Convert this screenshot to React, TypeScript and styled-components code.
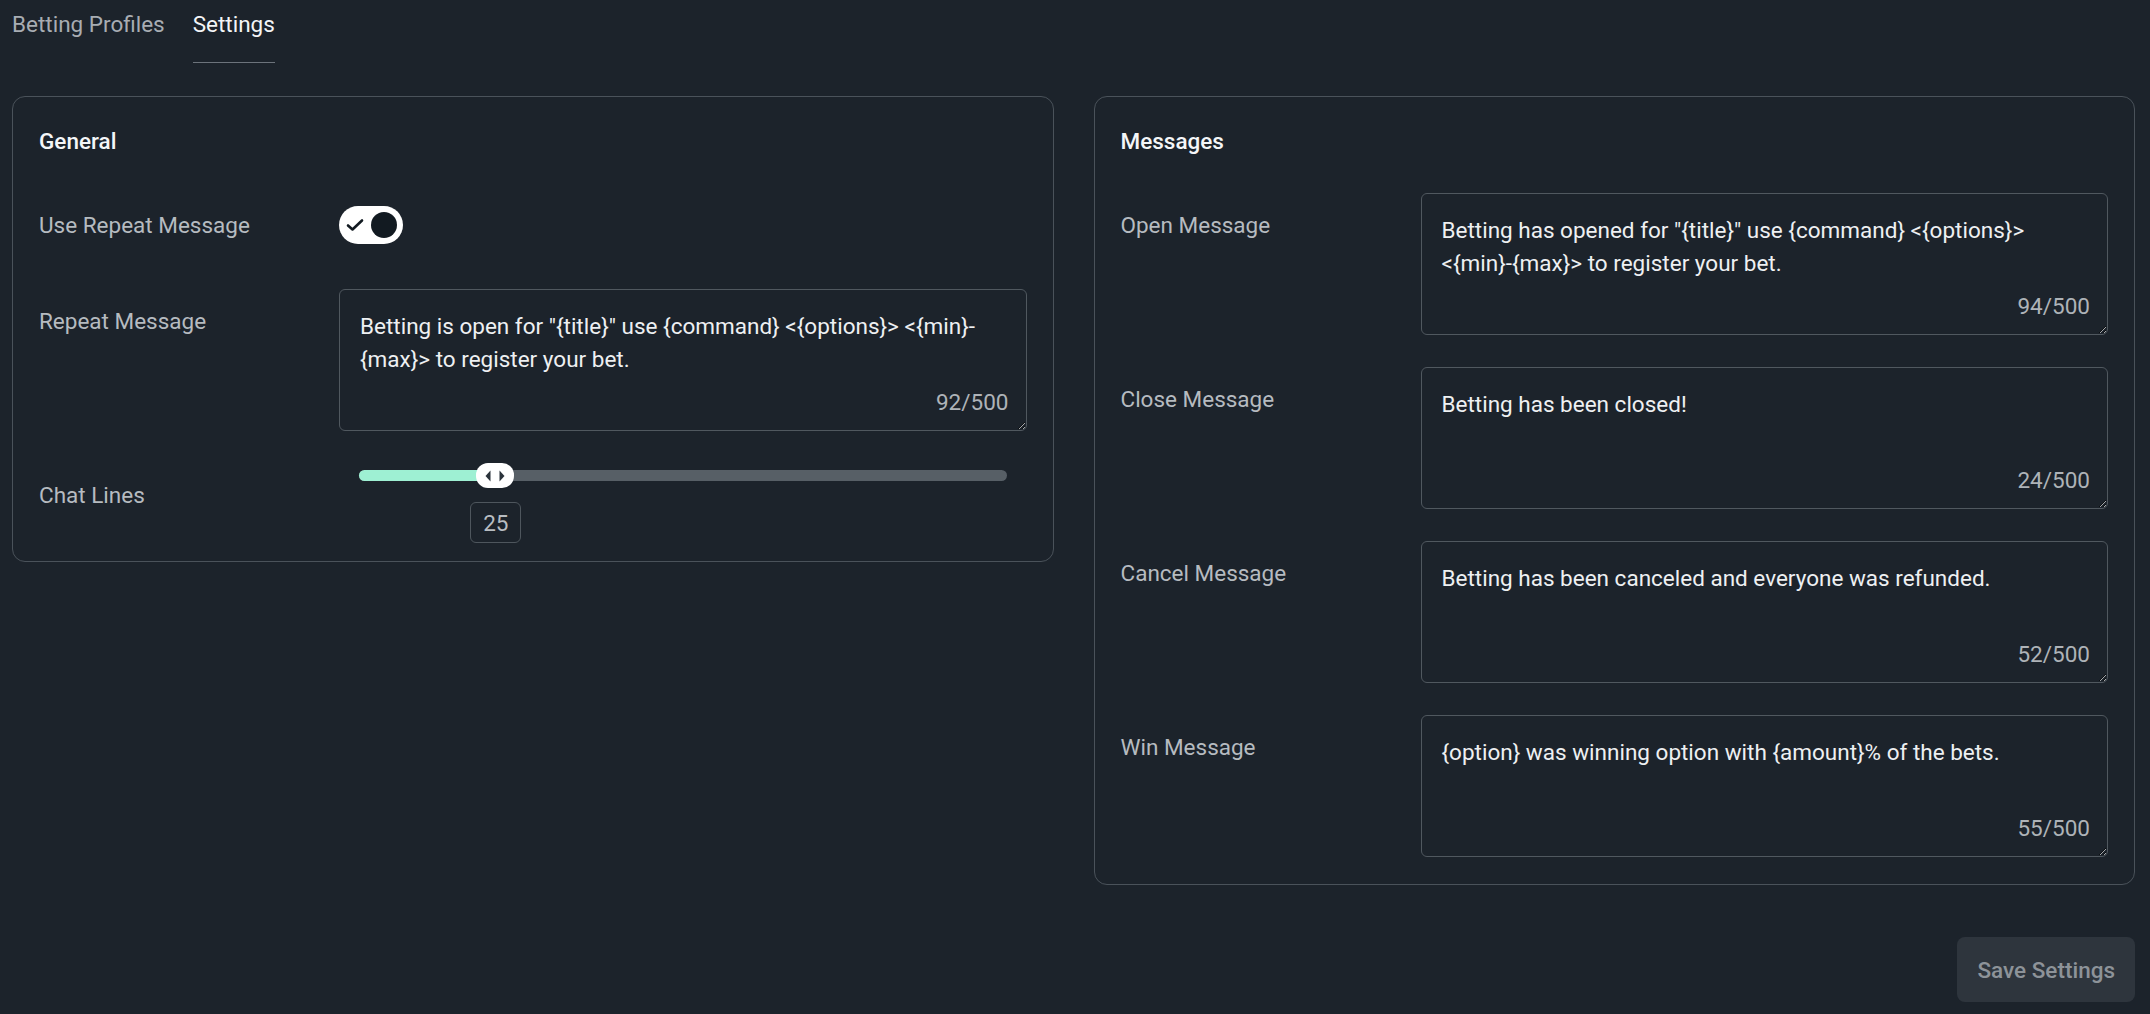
import styled, { createGlobalStyle } from "styled-components";

const GlobalStyle = createGlobalStyle`
  html, body {
    margin: 0;
    padding: 0;
    background: #1c232b;
  }

  body {
    font-family: Roboto, "Liberation Sans", sans-serif;
    font-size: 22.5px;
    color: #eef0f2;
  }

  * {
    box-sizing: border-box;
  }
`;

const Page = styled.div`
  min-height: 1014px;
  padding: 0 15px 24px 12px;
  background: #1c232b;
`;

const TabBar = styled.nav`
  display: flex;
  gap: 28px;
  padding-top: 8px;
`;

const Tab = styled.div<{ $active?: boolean }>`
  padding-bottom: 21px;
  font-size: 22.5px;
  line-height: 33px;
  color: ${(p) => (p.$active ? "#f3f5f7" : "#a8adb3")};
  border-bottom: 1px solid ${(p) => (p.$active ? "#6c737b" : "transparent")};
`;

const Columns = styled.div`
  display: grid;
  grid-template-columns: 1fr 1fr;
  gap: 40px;
  align-items: start;
  margin-top: 33px;
`;

const Card = styled.section<{ $bottom?: number }>`
  border: 1px solid #4a525a;
  border-radius: 13px;
  padding: 28px 26px ${(p) => p.$bottom ?? 27}px;
`;

const CardTitle = styled.h2`
  margin: 0 0 35px;
  font-size: 22.5px;
  line-height: 33px;
  font-weight: 500;
  color: #f4f6f8;
`;

const Rows = styled.div`
  display: flex;
  flex-direction: column;
  gap: 32px;
`;

const Field = styled.div`
  display: grid;
  grid-template-columns: 300px 1fr;
  align-items: start;
`;

const Label = styled.label`
  padding-top: 16px;
  font-size: 22.5px;
  line-height: 33px;
  color: #b6bbc0;
`;

const ToggleHolder = styled.div`
  display: flex;
  align-items: center;
  height: 64px;
`;

const Toggle = styled.div`
  display: flex;
  align-items: center;
  justify-content: space-between;
  width: 64px;
  height: 38px;
  padding: 0 6px 0 7px;
  border-radius: 19px;
  background: #ffffff;
`;

const Knob = styled.span`
  width: 26px;
  height: 26px;
  border-radius: 50%;
  background: #121a21;
`;

const AreaWrap = styled.div`
  position: relative;
`;

const TextArea = styled.textarea`
  display: block;
  width: 100%;
  height: 142px;
  padding: 20px 20px;
  border: 1px solid #50585f;
  border-radius: 6px;
  background: #1c232b;
  color: #eef0f2;
  font-family: Roboto, "Liberation Sans", sans-serif;
  font-size: 22.5px;
  line-height: 33px;
  resize: vertical;
  outline: none;
`;

const Counter = styled.span`
  position: absolute;
  right: 18px;
  bottom: 12px;
  font-size: 22.5px;
  line-height: 33px;
  color: #aeb3b8;
`;

const SliderBox = styled.div`
  position: relative;
  height: 74px;
  padding: 0 20px;
`;

const Track = styled.div`
  position: relative;
  height: 24px;
  display: flex;
  align-items: center;
`;

const Rail = styled.div`
  position: relative;
  width: 100%;
  height: 11px;
  border-radius: 6px;
  background: #575f66;
`;

const Fill = styled.div`
  height: 100%;
  border-radius: 6px;
  background: #9ef0d3;
`;

const Thumb = styled.div`
  position: absolute;
  top: 0;
  width: 38px;
  height: 25px;
  margin-left: -19px;
  display: flex;
  align-items: center;
  justify-content: center;
  border-radius: 12px;
  background: #ffffff;
`;

const ValueBox = styled.div`
  position: absolute;
  top: 39px;
  width: 51px;
  height: 41px;
  margin-left: -25px;
  display: flex;
  align-items: center;
  justify-content: center;
  border: 1px solid #4e565d;
  border-radius: 6px;
  font-size: 22.5px;
  color: #b8bdc2;
`;

const Footer = styled.div`
  display: flex;
  justify-content: flex-end;
  margin-top: 52px;
`;

const SaveButton = styled.button`
  height: 65px;
  padding: 0 20px;
  border: none;
  border-radius: 8px;
  background: #2e353d;
  color: #8d9399;
  font-family: Roboto, "Liberation Sans", sans-serif;
  font-size: 22.5px;
  font-weight: 500;
`;

const messages = [
  {
    label: "Open Message",
    text: 'Betting has opened for "{title}" use {command} <{options}> <{min}-{max}> to register your bet.',
  },
  { label: "Close Message", text: "Betting has been closed!" },
  { label: "Cancel Message", text: "Betting has been canceled and everyone was refunded." },
  { label: "Win Message", text: "{option} was winning option with {amount}% of the bets." },
];

const repeatText =
  'Betting is open for "{title}" use {command} <{options}> <{min}-{max}> to register your bet.';

const MessageField = ({ label, text, count }: { label: string; text: string; count?: number }) => (
  <Field>
    <Label>{label}</Label>
    <AreaWrap>
      <TextArea defaultValue={text} readOnly spellCheck={false} />
      <Counter>{count ?? text.length}/500</Counter>
    </AreaWrap>
  </Field>
);

const ChatLines = ({ value, min, max }: { value: number; min: number; max: number }) => {
  const pct = ((value - min) / (max - min)) * 100;
  return (
    <SliderBox>
      <Track>
        <Rail>
          <Fill style={{ width: `${pct}%` }} />
        </Rail>
        <Thumb style={{ left: `${pct}%` }}>
          <svg width="20" height="12" viewBox="0 0 20 12">
            <path d="M5.5 0.5 L0.5 6 L5.5 11.5 Z" fill="#2b333b" />
            <path d="M14.5 0.5 L19.5 6 L14.5 11.5 Z" fill="#2b333b" />
          </svg>
        </Thumb>
      </Track>
      <ValueBox style={{ left: `calc(20px + (100% - 40px) * ${pct / 100})` }}>{value}</ValueBox>
    </SliderBox>
  );
};

const App = () => {
  return (
    <Page>
      <GlobalStyle />
      <TabBar>
        <Tab>Betting Profiles</Tab>
        <Tab $active>Settings</Tab>
      </TabBar>
      <Columns>
        <Card $bottom={24}>
          <CardTitle>General</CardTitle>
          <Rows>
            <Field>
              <Label>Use Repeat Message</Label>
              <ToggleHolder>
                <Toggle>
                  <svg width="18" height="14" viewBox="0 0 18 14">
                    <path
                      d="M2 7.5 L6.5 11.5 L16 2.5"
                      fill="none"
                      stroke="#121a21"
                      strokeWidth="2.6"
                      strokeLinecap="round"
                      strokeLinejoin="round"
                    />
                  </svg>
                  <Knob />
                </Toggle>
              </ToggleHolder>
            </Field>
            <MessageField label="Repeat Message" text={repeatText} count={92} />
            <Field>
              <Label>Chat Lines</Label>
              <ChatLines value={25} min={5} max={100} />
            </Field>
          </Rows>
        </Card>
        <Card>
          <CardTitle>Messages</CardTitle>
          <Rows>
            {messages.map((m) => (
              <MessageField key={m.label} label={m.label} text={m.text} />
            ))}
          </Rows>
        </Card>
      </Columns>
      <Footer>
        <SaveButton>Save Settings</SaveButton>
      </Footer>
    </Page>
  );
};

export default App;
